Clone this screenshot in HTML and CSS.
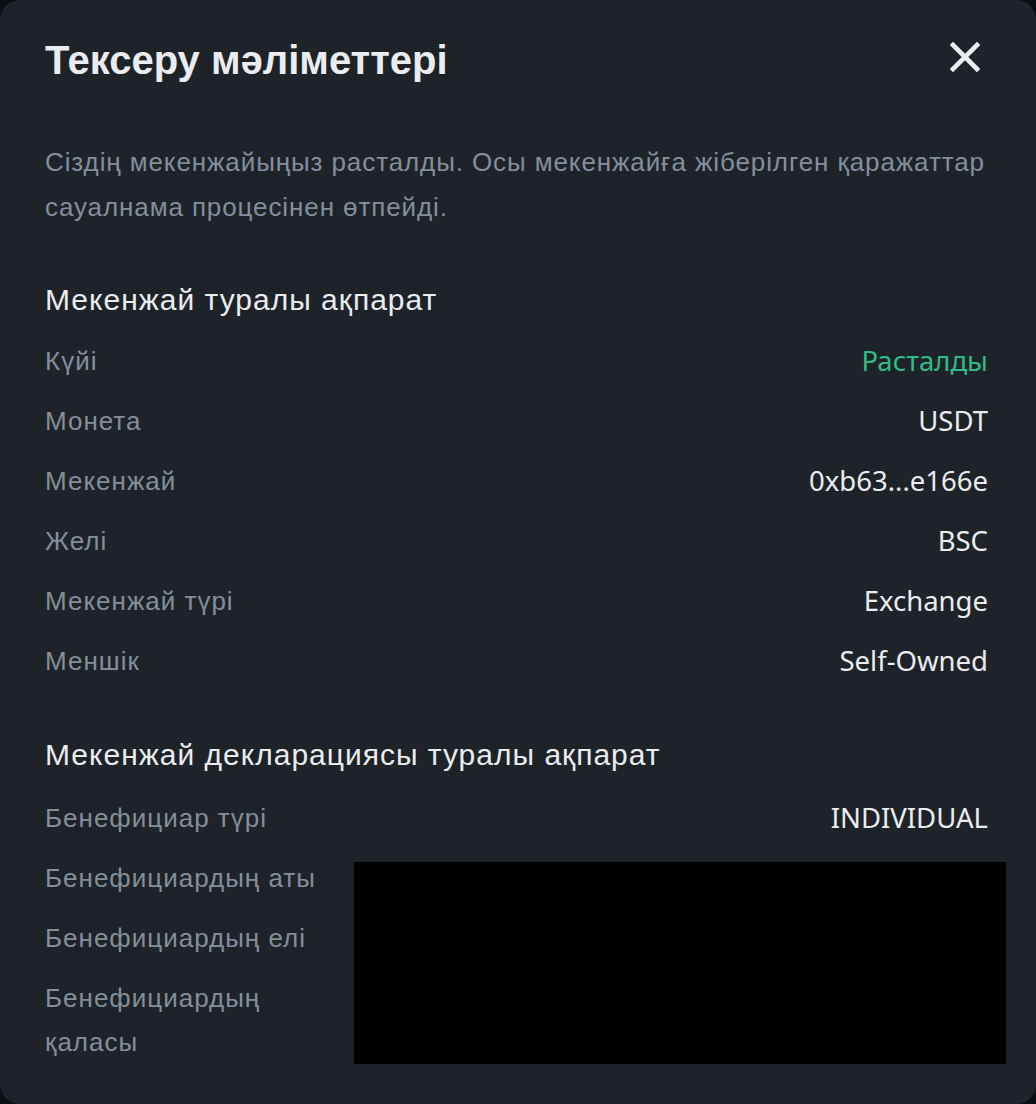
FILE: index.html
```html
<!DOCTYPE html>
<html lang="kk">
<head>
<meta charset="utf-8">
<title>Тексеру мәліметтері</title>
<link rel="stylesheet" href="styles.css">
</head>
<body>
<div class="modal">
  <div class="header">
    <h1 class="title">Тексеру мəліметтері</h1>
    <button class="close" aria-label="Жабу">
      <svg width="30" height="30" viewBox="0 0 30 30"><path d="M3 3 L27 27 M27 3 L3 27" stroke="#eaecef" stroke-width="4.6" stroke-linecap="square" fill="none"/></svg>
    </button>
  </div>
  <p class="desc">Сіздің мекенжайыңыз расталды. Осы мекенжайға жіберілген қаражаттар сауалнама процесінен өтпейді.</p>

  <h2 class="section first">Мекенжай туралы ақпарат</h2>
  <div class="rows rows-a">
    <div class="row"><span class="label">Күйі</span><span class="value green">Расталды</span></div>
    <div class="row"><span class="label">Монета</span><span class="value">USDT</span></div>
    <div class="row"><span class="label">Мекенжай</span><span class="value">0xb63...e166e</span></div>
    <div class="row"><span class="label">Желі</span><span class="value">BSC</span></div>
    <div class="row"><span class="label">Мекенжай түрі</span><span class="value">Exchange</span></div>
    <div class="row"><span class="label">Меншік</span><span class="value">Self-Owned</span></div>
  </div>

  <h2 class="section second">Мекенжай декларациясы туралы ақпарат</h2>
  <div class="rows rows-b">
    <div class="row"><span class="label">Бенефициар түрі</span><span class="value">INDIVIDUAL</span></div>
    <div class="row"><span class="label">Бенефициардың аты</span><span class="value"></span></div>
    <div class="row"><span class="label">Бенефициардың елі</span><span class="value"></span></div>
    <div class="row"><span class="label">Бенефициардың қаласы</span><span class="value"></span></div>
  </div>
  <div class="redact"></div>
</div>
</body>
</html>
```

FILE: styles.css
```css
* { box-sizing: border-box; }
html, body { margin: 0; padding: 0; }
body {
  background: #0b0e11;
  font-family: "Liberation Sans", Arial, sans-serif;
}
.modal {
  position: relative;
  width: 1036px;
  height: 1104px;
  background: #1e2329;
  border-radius: 20px;
  padding: 0 48px 0 45px;
  color: #eaecef;
}
.header {
  height: 120px;
  display: flex;
  align-items: center;
  justify-content: space-between;
}
.title {
  margin: 0;
  font-size: 40px;
  font-weight: 700;
  line-height: 48px;
  color: #eaecef;
}
.close {
  background: none;
  border: 0;
  padding: 0;
  width: 30px;
  height: 30px;
  margin-right: 8px;
  margin-top: -6px;
  display: flex;
}
.desc {
  margin: 20px 0 0;
  font-size: 26px;
  letter-spacing: 0.9px;
  line-height: 45px;
  color: #848e9c;
}
.section {
  margin: 0;
  font-size: 30px;
  letter-spacing: 1px;
  font-weight: 400;
  line-height: 40px;
  color: #eaecef;
}
.section.first { margin-top: 50px; }
.section.second { margin-top: 44px; }
.rows-a { margin-top: 11px; }
.rows-b { margin-top: 13px; }
.row {
  display: flex;
  justify-content: space-between;
  gap: 16px;
  padding: 8px 0;
  line-height: 44px;
}
.label {
  color: #848e9c;
  font-size: 26px;
  letter-spacing: 1px;
  max-width: 300px;
}
.value {
  color: #eaecef;
  font-family: "Noto Sans", "Open Sans", sans-serif;
  font-size: 27.5px;
  text-align: right;
}
.value.green { color: #2ebd85; }
.redact {
  position: absolute;
  left: 354px;
  top: 862px;
  width: 652px;
  height: 202px;
  background: #000;
}
```
